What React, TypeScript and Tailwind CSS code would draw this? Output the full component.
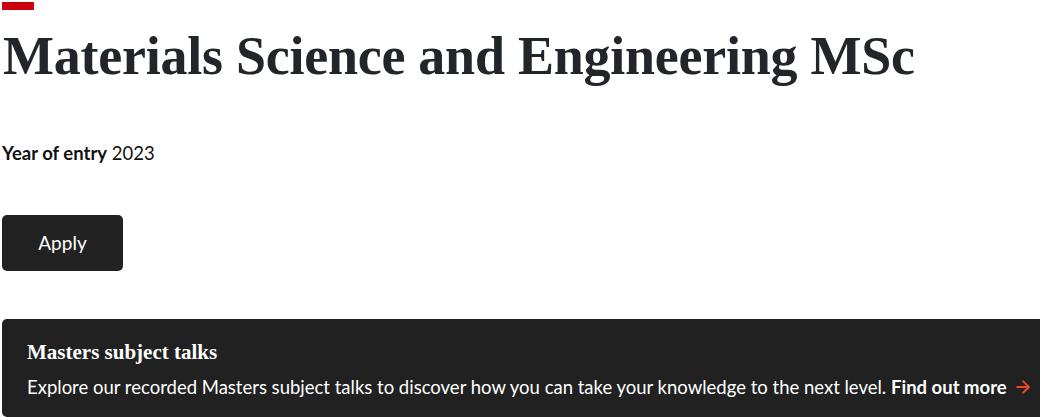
import { ArrowRight } from 'lucide-react';

export default function App() {
  return (
    <div className="w-[1040px] h-[418px] overflow-hidden bg-white">
      <div className="pl-[2px] pt-[2px]">
        {/* Accent bar */}
        <div className="w-8 h-2 bg-[#c8000f]" />

        <h1 className="mt-[14px] ml-[1px] text-[54px] leading-[64px] font-bold tracking-[-0.25px] text-[#22262b] font-['Liberation_Serif',serif]">
          Materials Science and Engineering MSc
        </h1>

        <p className="mt-[53px] text-[18.5px] leading-[24px] text-[#111] font-['Lato',sans-serif]">
          <span className="font-bold">Year of entry</span> 2023
        </p>

        <button className="mt-[50px] w-[121px] h-[56px] rounded-[5px] bg-[#222222] text-white text-[19px] font-['Lato',sans-serif]">
          Apply
        </button>

        {/* Subject talks banner */}
        <div className="mt-[48px] w-[1100px] h-[98px] rounded-[5px] bg-[#212121] pl-[25px] pt-[20px] text-white">
          <h2 className="text-[21px] leading-[26px] font-bold font-['Liberation_Serif',serif]">Masters subject talks</h2>
          <p className="mt-[9px] flex items-center text-[18.5px] leading-[26px] font-['Lato',sans-serif]">
            <span>
              Explore our recorded Masters subject talks to discover how you can take your knowledge to the next level.{' '}
              <span className="font-bold">Find out more</span>
            </span>
            <ArrowRight className="ml-[6px] w-[20px] h-[20px] text-[#ec4528]" strokeWidth={2.25} />
          </p>
        </div>
      </div>
    </div>
  );
}
